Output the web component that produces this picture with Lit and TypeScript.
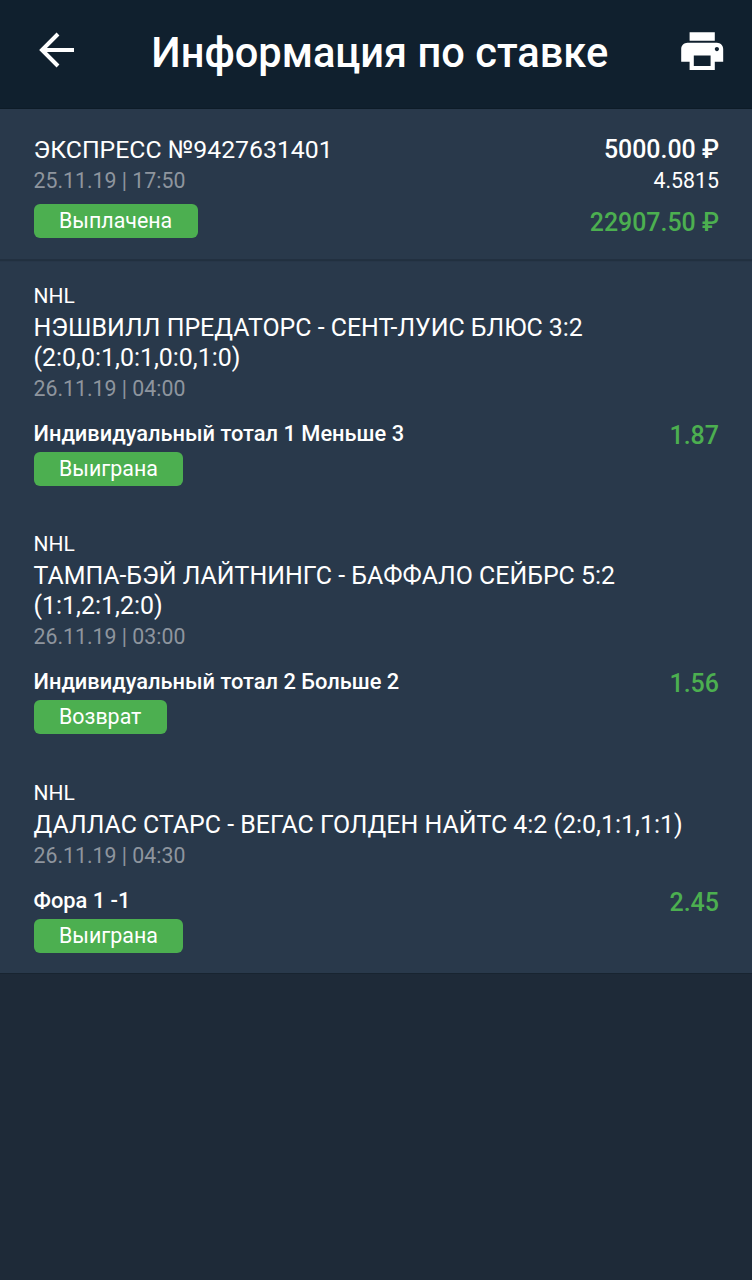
import { LitElement, html, css } from "lit";
import { customElement } from "lit/decorators.js";

const events = [
  { name: "НЭШВИЛЛ ПРЕДАТОРС - СЕНТ-ЛУИС БЛЮС 3:2 (2:0,0:1,0:1,0:0,1:0)", date: "26.11.19 | 04:00", pick: "Индивидуальный тотал 1 Меньше 3", odd: "1.87", status: "Выиграна" },
  { name: "ТАМПА-БЭЙ ЛАЙТНИНГС - БАФФАЛО СЕЙБРС 5:2 (1:1,2:1,2:0)", date: "26.11.19 | 03:00", pick: "Индивидуальный тотал 2 Больше 2", odd: "1.56", status: "Возврат" },
  { name: "ДАЛЛАС СТАРС - ВЕГАС ГОЛДЕН НАЙТС 4:2 (2:0,1:1,1:1)", date: "26.11.19 | 04:30", pick: "Фора 1 -1", odd: "2.45", status: "Выиграна" },
];

@customElement("app-root")
export class AppRoot extends LitElement {
  static styles = css`
    :host { display: block; width: 752px; height: 1280px; background: #1e2a38; font-family: Roboto, "Liberation Sans", sans-serif; color: #fff; overflow: hidden; }
    header { height: 109px; background: #10202e; border-bottom: 1px solid #0d1b27; display: flex; align-items: flex-start; justify-content: space-between; padding: 0 25px 0 36px; box-sizing: border-box; }
    header h1 { margin: 29px 0 0 7px; font-size: 41.6px; font-weight: 500; line-height: 48px; }
    header svg { display: block; }
    .back { margin-top: 30px; }
    .print { margin-top: 25.7px; }
    .summary { position: relative; height: 151px; box-sizing: border-box; background: #29394b; padding: 25px 33px 0 33.5px; display: flex; justify-content: space-between; border-bottom: 1px solid #223040; box-shadow: 0 1px 1px rgba(20, 32, 44, 0.35); }
    .col { display: flex; flex-direction: column; }
    .right { align-items: flex-end; }
    .t { font-size: 24.8px; line-height: 32px; }
    .d { font-size: 21.3px; line-height: 30px; color: #8e959e; }
    .amount { font-size: 24.9px; line-height: 32px; font-weight: 500; }
    .coef { font-size: 21.3px; line-height: 30px; }
    .win { font-size: 24.9px; line-height: 32px; color: #4caf50; font-weight: 500; margin-top: 11px; }
    .badge { align-self: flex-start; background: #4caf50; border-radius: 6px; height: 34px; line-height: 34px; padding: 0 25.5px; font-size: 21.4px; color: #fff; }
    .summary .badge { margin-top: 8px; }
    .list { background: #29394b; padding-top: 20px; padding-bottom: 20px; border-bottom: 1px solid #182430; }
    .ev { padding: 0 33px 0 33.5px; margin-bottom: 42.4px; }
    .ev:last-child { margin-bottom: 0; }
    .lg { font-size: 21px; line-height: 32px; }
    .nm { font-size: 24.92px; line-height: 30px; margin-top: 1px; }
    .ev .d { margin-top: 1px; }
    .row { display: flex; justify-content: space-between; margin-top: 14px; }
    .pick { font-size: 21.85px; font-weight: 500; line-height: 32px; }
    .odd { font-size: 25px; font-weight: 500; line-height: 32px; color: #4caf50; margin-top: 2px; margin-bottom: -2px; }
    .ev .badge { display: inline-block; margin-top: 2px; }
  `;

  render() {
    return html`
      <header>
        <svg class="back" width="40" height="40" viewBox="0 0 40 40" fill="none" stroke="#fff" stroke-width="4"><path d="M38 20H7M22 4 6 20l16 16"/></svg>
        <h1>Информация по ставке</h1>
        <svg class="print" width="50.4" height="50.4" viewBox="0 0 24 24" fill="#fff"><path d="M19 8H5c-1.66 0-3 1.34-3 3v6h4v4h12v-4h4v-6c0-1.66-1.34-3-3-3zm-3 11H8v-5h8v5zm3-7c-.55 0-1-.45-1-1s.45-1 1-1 1 .45 1 1-.45 1-1 1zm-1-9H6v4h12V3z"/></svg>
      </header>
      <section class="summary">
        <div class="col">
          <div class="t">ЭКСПРЕСС №9427631401</div>
          <div class="d">25.11.19 | 17:50</div>
          <div class="badge">Выплачена</div>
        </div>
        <div class="col right">
          <div class="amount">5000.00 ₽</div>
          <div class="coef">4.5815</div>
          <div class="win">22907.50 ₽</div>
        </div>
      </section>
      <section class="list">
        ${events.map((e) => html`
          <div class="ev">
            <div class="lg">NHL</div>
            <div class="nm">${e.name}</div>
            <div class="d">${e.date}</div>
            <div class="row"><div class="pick">${e.pick}</div><div class="odd">${e.odd}</div></div>
            <div class="badge">${e.status}</div>
          </div>`)}
      </section>
    `;
  }
}
